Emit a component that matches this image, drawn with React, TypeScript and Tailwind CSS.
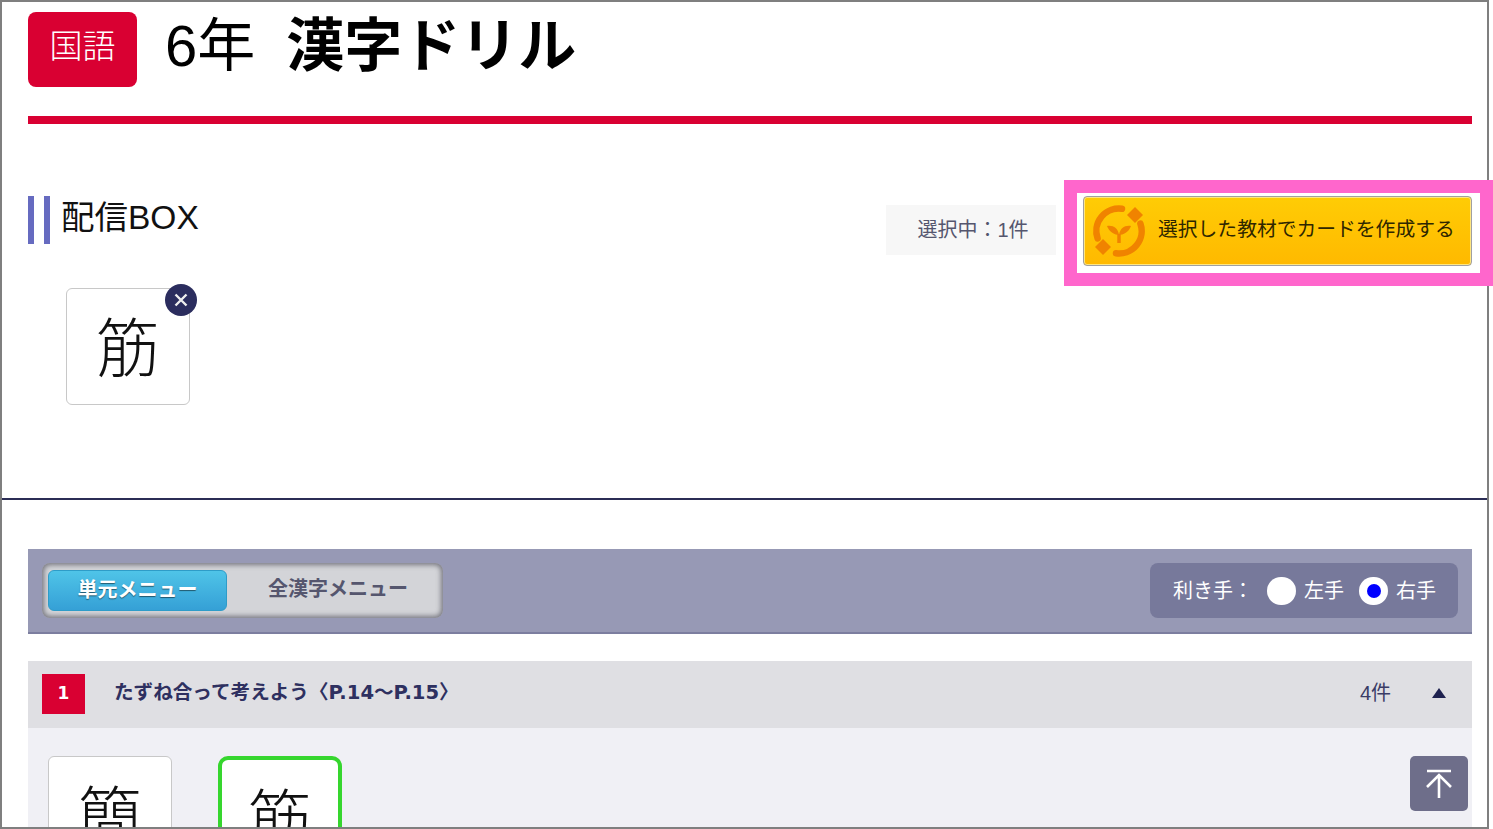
const sans = "font-['Liberation_Sans','Noto_Sans_CJK_JP','Noto_Sans_CJK_SC',sans-serif]";

function SparkLogo() {
  return (
    <svg width="54" height="54" viewBox="0 0 54 54" fill="none" className="shrink-0">
      <g stroke="#f08300" strokeWidth="6.5" strokeLinecap="round">
        <path d="M5.6 34.4 A 22.5 22.5 0 0 1 30 4.7" />
        <path d="M48.4 19.6 A 22.5 22.5 0 0 1 24 49.3" />
      </g>
      <path d="M43 3 L51 11 L43 19 L35 11 Z" fill="#f08300" />
      <path d="M11 35 L19 43 L11 51 L3 43 Z" fill="#f08300" />
      <path d="M27 39 L27 30" stroke="#f08300" strokeWidth="3.5" />
      <path d="M27 31 C23 31 17 28 15 22 C21 21 26 24 27 31 Z" fill="#f08300" />
      <path d="M27 31 C31 31 37 28 39 22 C33 21 28 24 27 31 Z" fill="#f08300" />
    </svg>
  );
}

function KanjiCard({ char, selected, children }: { char: string; selected?: boolean; children?: React.ReactNode }) {
  return (
    <div
      className={`relative flex h-[117px] w-[124px] shrink-0 justify-center bg-white ${
        selected ? 'rounded-[10px] border-[4px] border-[#36d62e] pt-[15px]' : 'rounded-[6px] border border-[#c8c8c8] pt-[15px]'
      }`}
    >
      <span className={`text-[64px] leading-[90px] font-light text-[#111] ${sans}`}>{char}</span>
      {children}
    </div>
  );
}

export default function App() {
  return (
    <div className={`relative h-[829px] w-[1493px] overflow-hidden bg-white ${sans}`}>
      <div className="h-[829px] w-[1489px] overflow-hidden border-2 border-[#7f7f7f] pt-[10px] pr-[15px] pl-[26px]">
        {/* title */}
        <div className="flex h-[75px] items-start">
          <div className="flex h-[75px] w-[109px] items-center justify-center rounded-[8px] bg-[#d90032] pb-[5px] text-[33px] font-light text-white">
            国語
          </div>
          <h1 className="ml-[28px] flex h-[68px] items-center text-[58px] leading-none text-black">
            <span className="font-normal">6年</span>
            <span className="ml-[31px] font-bold">漢字ドリル</span>
          </h1>
        </div>
        <div className="mt-[29px] h-2 bg-[#d90032]" />

        {/* delivery box */}
        <div className="mt-[72px] flex h-[70px] items-start justify-between">
          <div className="flex items-start">
            <div className="h-12 w-[22px] border-x-[6px] border-[#666bc0]" />
            <span className="ml-[11px] text-[33.5px] leading-[44px] text-[#111]">配信BOX</span>
          </div>
          <div className="flex items-start">
            <div className="mt-[9px] flex h-[50px] w-[170px] items-center justify-center bg-[#f7f7f7] pl-[4px] text-[20px] text-[#55566e]">
              選択中：1件
            </div>
            <button className="ml-[27px] flex h-[70px] w-[389px] items-center rounded-[4px] border border-[#a0a0a0] bg-gradient-to-b from-[#ffcc05] to-[#ffb900] pl-[8px] text-[19.8px] text-[#2e2600] shadow-[inset_0_0_0_1px_#ffe680]">
              <SparkLogo />
              <span className="ml-[12px] pb-[2px]">選択した教材でカードを作成する</span>
            </button>
          </div>
        </div>

        <div className="mt-[22px] ml-[38px]">
          <KanjiCard char="筋">
            <span className="absolute top-[-5px] right-[-8px] flex h-8 w-8 items-center justify-center rounded-full bg-[#2b2d5e]">
              <svg width="14" height="14" viewBox="0 0 14 14" stroke="#eee" strokeWidth="2.4">
                <path d="M1.5 1.5 L12.5 12.5 M12.5 1.5 L1.5 12.5" />
              </svg>
            </span>
          </KanjiCard>
        </div>

        <div className="mt-[93px] -mr-[15px] -ml-[26px] h-[2px] bg-[#2b2d55]" />

        {/* menu bar */}
        <div className="mt-[49px] flex h-[85px] items-center justify-between border-b-2 border-[#7c7e9f] bg-[#9799b5] px-[14px]">
          <div className="flex h-[55px] w-[401px] items-center rounded-[8px] bg-[#d3d4d8] pl-[6px] shadow-[inset_0_0_5px_2px_rgba(90,90,100,0.75)]">
            <div className="flex h-[41px] w-[179px] items-center justify-center rounded-[6px] border border-[#2e9cc8] bg-gradient-to-b from-[#4fc4e8] to-[#35a0d6] pb-[1px] text-[20px] font-bold text-white [text-shadow:0_1px_1px_rgba(0,0,0,0.5)]">
              単元メニュー
            </div>
            <div className="flex h-[41px] flex-1 items-center justify-center pb-[4px] pl-[6px] text-[20px] font-bold text-[#55566e]">
              全漢字メニュー
            </div>
          </div>
          <div className="flex h-[55px] w-[308px] items-center rounded-[8px] bg-[#77799b] pl-[23px] text-[20px] text-white">
            <span className="w-[94px]">利き手：</span>
            <span className="h-[28px] w-[29px] rounded-full bg-white" />
            <span className="ml-[8px]">左手</span>
            <span className="ml-[15px] flex h-[28px] w-[29px] items-center justify-center rounded-full bg-white">
              <span className="h-[14px] w-[14px] rounded-full bg-[#0000ff]" />
            </span>
            <span className="ml-[8px]">右手</span>
          </div>
        </div>

        {/* unit row */}
        <div className="mt-[27px] flex h-[67px] items-center bg-[#dfdfe3] pr-[26px] pl-[14px]">
          <div className="mb-[1px] flex h-10 w-[43px] items-center justify-center bg-[#d90032] font-['DejaVu_Sans',sans-serif] text-[17px] font-bold text-white">1</div>
          <span className="ml-[29px] pb-[3px] font-['DejaVu_Sans','Noto_Sans_CJK_JP',sans-serif] text-[19.6px] font-bold text-[#2e3060]">たずね合って考えよう〈P.14～P.15〉</span>
          <span className="ml-auto pb-[3px] text-[20px] text-[#3a3c66]">4件</span>
          <span className="mb-[3px] ml-[41px] h-0 w-0 border-x-[7px] border-b-[10px] border-x-transparent border-b-[#1f2250]" />
        </div>
        <div className="flex h-[200px] items-start gap-[46px] bg-[#f0f0f5] pt-[28px] pl-[20px]">
          <KanjiCard char="簡" />
          <KanjiCard char="筋" selected />
        </div>
      </div>

      {/* back to top */}
      <button className="absolute top-[756px] left-[1410px] flex h-[55px] w-[58px] items-center justify-center rounded-[5px] bg-[#6e6e8a]">
        <svg width="28" height="30" viewBox="0 0 28 30" fill="none" stroke="white" strokeWidth="2.6">
          <path d="M2 2 H26 M14 29 V6 M2 18 L14 6 L26 18" />
        </svg>
      </button>

      {/* highlight annotation */}
      <div className="pointer-events-none absolute top-[180px] left-[1064px] h-[106px] w-[429px] border-[13px] border-[#ff66cc]" />
    </div>
  );
}
